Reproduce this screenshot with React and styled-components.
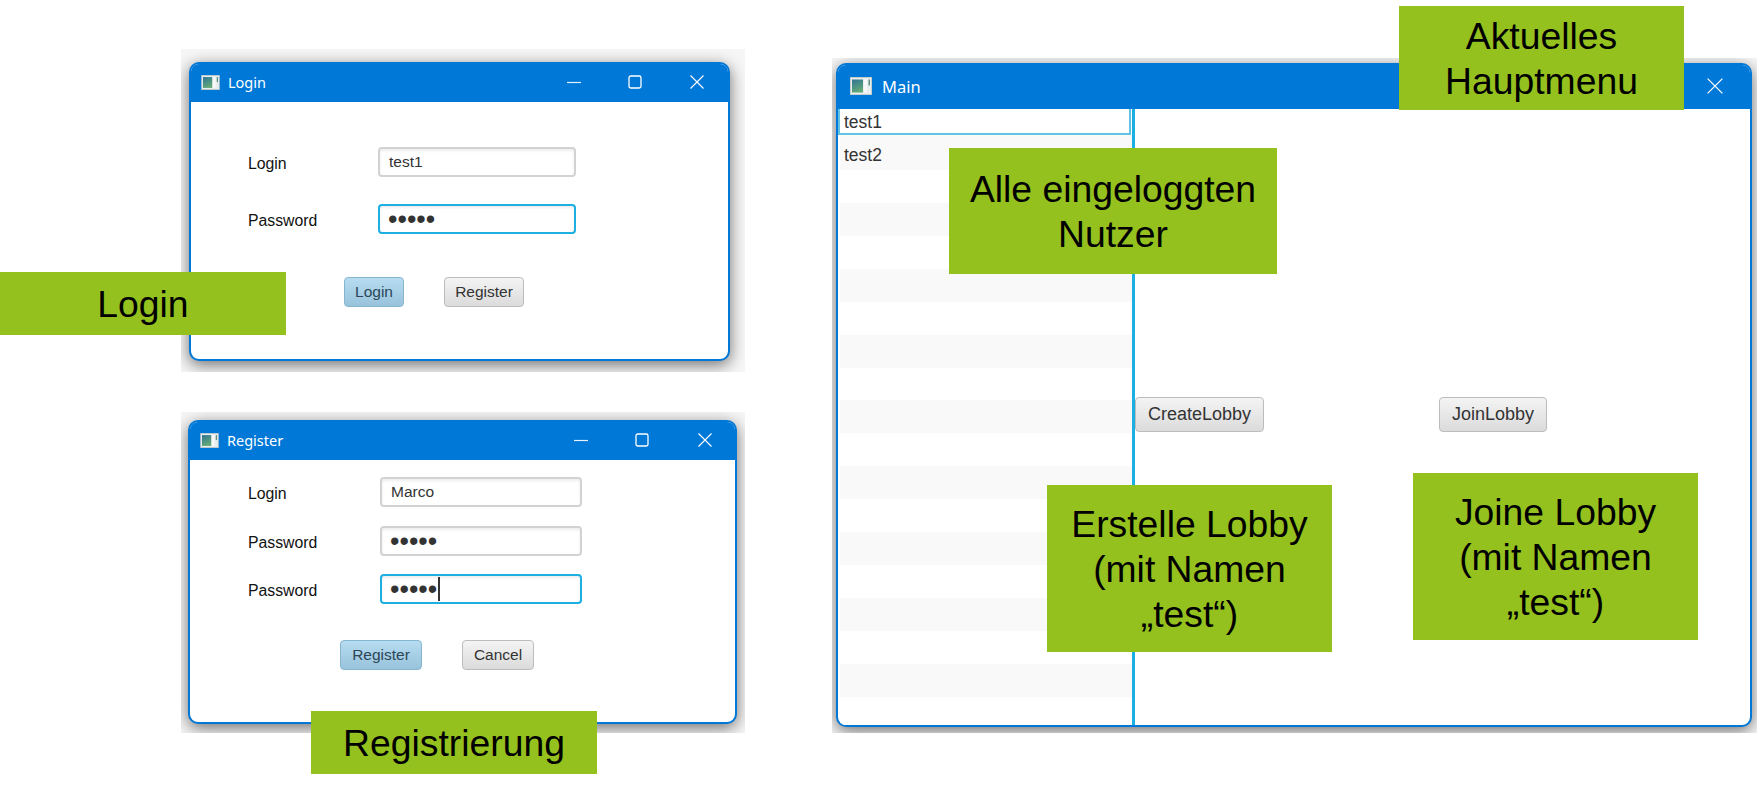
import styled, { createGlobalStyle } from "styled-components";

const GlobalStyle = createGlobalStyle`
  html, body {
    margin: 0;
    background: #fff;
  }
`;

const Slide = styled.div`
  position: relative;
  width: 1757px;
  height: 789px;
  overflow: hidden;
  background: #fff;
  font-family: "Liberation Sans", Arial, sans-serif;
`;

const Shot = styled.div`
  position: absolute;
  left: ${(p) => p.$x}px;
  top: ${(p) => p.$y}px;
  width: ${(p) => p.$w}px;
  height: ${(p) => p.$h}px;
  padding: ${(p) => p.$pad};
  box-sizing: border-box;
  display: flex;
  overflow: hidden;
  background: #f6f6f6;
`;

const Window = styled.div`
  flex: 1;
  min-width: 0;
  display: flex;
  flex-direction: column;
  box-sizing: border-box;
  border: 2px solid #0078d7;
  border-radius: 10px;
  overflow: hidden;
  background: #fff;
  box-shadow: 0 4px 16px rgba(0, 0, 0, 0.55);
`;

const TitleBar = styled.div`
  flex: none;
  height: ${(p) => (p.$large ? 44 : 38)}px;
  display: flex;
  align-items: center;
  padding: 0 ${(p) => p.$right || 24}px 2px ${(p) => (p.$large ? 12 : 10)}px;
  box-sizing: border-box;
  background: #0078d7;
  color: #fff;
  font-family: "Noto Sans", sans-serif;
  font-size: ${(p) => (p.$large ? 16.5 : 14.5)}px;
`;

const Title = styled.span`
  flex: 1;
  margin-left: ${(p) => (p.$large ? 10 : 8)}px;
`;

const Controls = styled.div`
  display: flex;
  align-items: center;
  gap: 47px;

  svg:last-child {
    margin-left: ${(p) => p.$closeGap}px;
  }
`;

const Form = styled.div`
  flex: 1;
  display: grid;
  grid-template-columns: ${(p) => p.$labelWidth}px ${(p) => p.$fieldWidth}px;
  grid-auto-rows: 30px;
  row-gap: ${(p) => p.$gap}px;
  align-content: start;
  padding: ${(p) => p.$top}px 0 0 ${(p) => p.$left}px;
`;

const Label = styled.label`
  align-self: center;
  padding-top: 4px;
  font-size: 15.8px;
  color: #111;
`;

const Field = styled.div`
  display: flex;
  align-items: center;
  box-sizing: border-box;
  padding-left: 9px;
  border: 2px solid ${(p) => (p.$focused ? "#1bafe2" : "#d2d2d2")};
  border-radius: 4px;
  background: #fff;
  box-shadow: inset 0 2px 3px rgba(0, 0, 0, 0.07);
  font-size: 15.5px;
  color: #333;
`;

const Dots = styled.span`
  margin-left: -1px;
  font-size: 27px;
  line-height: 26px;
  color: #333;
`;

const Caret = styled.span`
  width: 1.5px;
  height: 24px;
  margin-left: 1px;
  background: #333;
`;

const ButtonRow = styled.div`
  grid-column: 1 / -1;
  display: flex;
  gap: 40px;
  margin: ${(p) => p.$top}px 0 0 ${(p) => p.$left}px;
`;

const Button = styled.div`
  flex: none;
  width: ${(p) => p.$w}px;
  height: ${(p) => p.$h || 30}px;
  display: flex;
  align-items: center;
  justify-content: center;
  box-sizing: border-box;
  border: 1.5px solid ${(p) => (p.$primary ? "#86b5d0" : "#bcbcbc")};
  border-radius: 4px;
  background: ${(p) =>
    p.$primary
      ? "linear-gradient(#b6dcf0, #98c3dc)"
      : "linear-gradient(#f4f4f4, #dbdbdb)"};
  font-size: ${(p) => p.$size || 15.5}px;
  color: ${(p) => (p.$primary ? "#2c4656" : "#333")};
`;

const MainBody = styled.div`
  flex: 1;
  min-height: 0;
  display: flex;
`;

const UserList = styled.div`
  flex: none;
  width: 297px;
  box-sizing: border-box;
  overflow: hidden;
  border-right: 3px solid #1bafe2;
`;

const SelectedRow = styled.div`
  height: 26px;
  display: flex;
  align-items: center;
  box-sizing: border-box;
  margin-right: 1px;
  padding: 2px 0 0 4px;
  border: 2px solid #62c2e4;
  border-top: none;
  font-size: 17.5px;
  color: #333;
`;

const UserRow = styled.div`
  height: ${(p) => (p.$first ? 35 : 32.93)}px;
  display: flex;
  align-items: center;
  box-sizing: border-box;
  margin-left: 2px;
  padding: ${(p) => (p.$first ? 5 : 0)}px 0 0 4px;
  background: ${(p) => (p.$striped ? "#f9f9f9" : "#fff")};
  font-size: 17.5px;
  color: #333;
`;

const ActionPane = styled.div`
  flex: 1;
  display: flex;
  align-items: center;
  gap: 175px;
  padding: 0 0 5px 0;
`;

const Callout = styled.div`
  position: absolute;
  left: ${(p) => p.$x}px;
  top: ${(p) => p.$y}px;
  width: ${(p) => p.$w}px;
  height: ${(p) => p.$h}px;
  display: flex;
  align-items: center;
  justify-content: center;
  box-sizing: border-box;
  padding-top: 2px;
  background: #95c11f;
  color: #000;
  font-size: 37.3px;
  line-height: 45px;
  text-align: center;
`;

const AppIcon = ({ large }) => (
  <svg width={large ? 22 : 19} height={large ? 18 : 15} viewBox="0 0 22 18">
    <defs>
      <linearGradient id="appIconFill" x1="0" y1="0" x2="0.4" y2="1">
        <stop offset="0" stopColor="#2f7494" />
        <stop offset="1" stopColor="#62a878" />
      </linearGradient>
    </defs>
    <rect x="0.5" y="0.5" width="21" height="17" fill="#e9eeee" stroke="#c4cccc" />
    <rect x="2" y="2.5" width="11" height="13" fill="url(#appIconFill)" />
    <rect x="14" y="2.5" width="3" height="13" fill="#f7f9f9" />
    <rect x="18.5" y="2.5" width="1.5" height="6" fill="#5f8f80" />
  </svg>
);

const MinimizeIcon = () => (
  <svg width="14" height="14" viewBox="0 0 14 14">
    <path d="M0 7.5h14" stroke="#fff" strokeWidth="1.2" opacity="0.9" />
  </svg>
);

const MaximizeIcon = () => (
  <svg width="14" height="14" viewBox="0 0 14 14">
    <rect x="1" y="1" width="12" height="12" rx="1.8" fill="none" stroke="#fff" strokeWidth="1.3" />
  </svg>
);

const CloseIcon = ({ size = 14 }) => (
  <svg width={size} height={size} viewBox="0 0 14 14">
    <path d="M0.5 0.5l13 13M13.5 0.5l-13 13" stroke="#fff" strokeWidth="1.1" />
  </svg>
);

const WindowControls = ({ closeGap = 2 }) => (
  <Controls $closeGap={closeGap}>
    <MinimizeIcon />
    <MaximizeIcon />
    <CloseIcon />
  </Controls>
);

const userRows = Array.from({ length: 18 }, (_, i) => ({
  name: i === 0 ? "test2" : "",
  striped: i % 2 === 0,
}));

export default function App() {
  return (
    <Slide>
      <GlobalStyle />

      <Shot $x={181} $y={49} $w={564} $h={323} $pad="13px 15px 11px 8px">
        <Window>
          <TitleBar>
            <AppIcon />
            <Title>Login</Title>
            <WindowControls closeGap={1} />
          </TitleBar>
          <Form $labelWidth={130} $fieldWidth={198} $gap={27} $top={45} $left={57}>
            <Label>Login</Label>
            <Field>test1</Field>
            <Label>Password</Label>
            <Field $focused>
              <Dots>•••••</Dots>
            </Field>
            <ButtonRow $top={16} $left={96}>
              <Button $primary $w={60}>Login</Button>
              <Button $w={80}>Register</Button>
            </ButtonRow>
          </Form>
        </Window>
      </Shot>

      <Shot $x={181} $y={412} $w={564} $h={321} $pad="8px 8px 9px 7px">
        <Window>
          <TitleBar $right={23}>
            <AppIcon />
            <Title>Register</Title>
            <WindowControls />
          </TitleBar>
          <Form $labelWidth={132} $fieldWidth={202} $gap={18.5} $top={17} $left={58}>
            <Label>Login</Label>
            <Field>Marco</Field>
            <Label>Password</Label>
            <Field>
              <Dots>•••••</Dots>
            </Field>
            <Label>Password</Label>
            <Field $focused>
              <Dots>•••••</Dots>
              <Caret />
            </Field>
            <ButtonRow $top={17} $left={92}>
              <Button $primary $w={82}>Register</Button>
              <Button $w={72}>Cancel</Button>
            </ButtonRow>
          </Form>
        </Window>
      </Shot>

      <Shot $x={832} $y={58} $w={925} $h={675} $pad="5px 5px 6px 4px">
        <Window>
          <TitleBar $large $right={27}>
            <AppIcon large />
            <Title $large>Main</Title>
            <CloseIcon size={16} />
          </TitleBar>
          <MainBody>
            <UserList>
              <SelectedRow>test1</SelectedRow>
              {userRows.map((row, i) => (
                <UserRow key={i} $first={i === 0} $striped={row.striped}>
                  {row.name}
                </UserRow>
              ))}
            </UserList>
            <ActionPane>
              <Button $w={129} $h={35} $size={18}>CreateLobby</Button>
              <Button $w={108} $h={35} $size={18}>JoinLobby</Button>
            </ActionPane>
          </MainBody>
        </Window>
      </Shot>

      <Callout $x={0} $y={272} $w={286} $h={63}>Login</Callout>
      <Callout $x={311} $y={711} $w={286} $h={63}>Registrierung</Callout>
      <Callout $x={1399} $y={6} $w={285} $h={104}>
        Aktuelles
        <br />
        Hauptmenu
      </Callout>
      <Callout $x={949} $y={148} $w={328} $h={126}>
        Alle eingeloggten
        <br />
        Nutzer
      </Callout>
      <Callout $x={1047} $y={485} $w={285} $h={167}>
        Erstelle Lobby
        <br />
        (mit Namen
        <br />
        „test“)
      </Callout>
      <Callout $x={1413} $y={473} $w={285} $h={167}>
        Joine Lobby
        <br />
        (mit Namen
        <br />
        „test“)
      </Callout>
    </Slide>
  );
}
